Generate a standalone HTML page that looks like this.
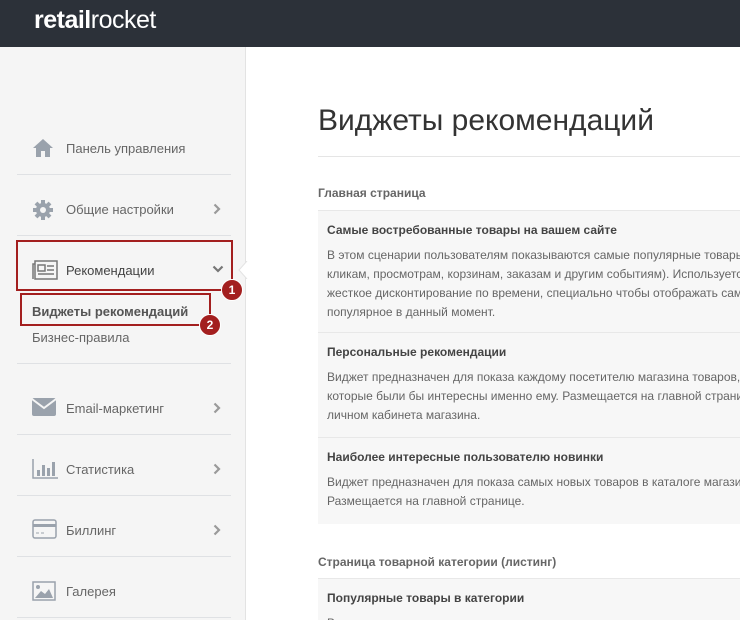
<!DOCTYPE html>
<html><head><meta charset="utf-8"><style>
*{margin:0;padding:0;box-sizing:border-box}
html,body{width:740px;height:620px;overflow:hidden}
body{font-family:"Liberation Sans",sans-serif;background:#fff;position:relative}
.hdr{position:absolute;left:0;top:0;width:740px;height:47px;background:#2c3139}
.logo{position:absolute;left:34px;top:6px;color:#fff;font-size:25px;letter-spacing:-0.5px}
.side{position:absolute;left:0;top:47px;width:246px;height:573px;background:#f5f5f5;border-right:1px solid #e3e3e3}
.sep{position:absolute;left:17px;width:214px;height:1px;background:#dfe1e4}
.it{position:absolute;left:66px;font-size:13px;color:#666;line-height:16px}
.ic{position:absolute;left:32px}
.chev{position:absolute;left:213px}
.red{position:absolute;border:2px solid #a31f1f}
.badge{position:absolute;width:22px;height:22px;border-radius:50%;background:#a31f1f;color:#fff;font-size:12px;font-weight:bold;text-align:center;line-height:20px;border:1px solid #fff}
h1{position:absolute;left:318px;top:104px;font-size:30px;font-weight:normal;color:#333;white-space:nowrap}
.hl{position:absolute;left:318px;top:156px;width:422px;height:1px;background:#e5e5e5}
.sh{position:absolute;left:318px;font-size:12px;font-weight:bold;color:#666;white-space:nowrap}
.card{position:absolute;left:318px;width:422px;background:#f7f7f7;border-top:1px solid #e8e8e8;padding:12px 0 0 9px;white-space:nowrap;overflow:hidden}
.card b{display:block;font-size:12px;color:#444;margin-bottom:9px}
.card p{font-size:12px;color:#666;line-height:19px}
</style></head><body>
<div class="hdr"><div class="logo"><b>retail</b>rocket</div></div>
<div class="side">
 <svg style="position:absolute;left:238px;top:214px" width="10" height="18"><path d="M9 0 L1 9 L9 18" fill="#fff" stroke="#e3e3e3"/></svg>
</div>
<div class="sep" style="top:174px"></div><div class="sep" style="top:235px"></div><div class="sep" style="top:363px"></div><div class="sep" style="top:434px"></div><div class="sep" style="top:495px"></div><div class="sep" style="top:556px"></div><div class="sep" style="top:617px"></div>

<svg class="ic" style="top:138px" width="22" height="20"><path d="M11 1 L1 10 H4 V19 H9 V13 H13 V19 H18 V10 H21Z" fill="#9aa2ac"/></svg>
<div class="it" style="top:141px">Панель управления</div>
<svg class="ic" style="top:199px" width="22" height="22"><circle cx="11" cy="11" r="7" fill="#9aa2ac"/><g stroke="#9aa2ac" stroke-width="4"><path d="M11 1V21M1 11H21M4 4L18 18M18 4L4 18"/></g><circle cx="11" cy="11" r="3" fill="#f5f5f5"/></svg>
<div class="it" style="top:202px">Общие настройки</div>
<svg class="chev" style="top:203px" width="8" height="12"><path d="M1.5 1.5L6 6L1.5 10.5" fill="none" stroke="#9a9a9a" stroke-width="2.2"/></svg>
<svg class="ic" style="top:260px" width="26" height="20"><rect x="3" y="1" width="22" height="18" fill="none" stroke="#777" stroke-width="1.5"/><path d="M3 4H1V19" fill="none" stroke="#777" stroke-width="1.5"/><rect x="6" y="5" width="7" height="6" fill="none" stroke="#777" stroke-width="1.5"/><path d="M15 6H22M15 10H22M6 14H22" stroke="#777" stroke-width="1.5"/></svg>
<div class="it" style="top:263px;color:#444">Рекомендации</div>
<svg class="chev" style="top:265px;left:212px" width="12" height="8"><path d="M1.5 1.5L6 6L10.5 1.5" fill="none" stroke="#777" stroke-width="2.2"/></svg>
<div class="it" style="left:32px;top:304px;font-weight:bold;color:#555">Виджеты рекомендаций</div>
<div class="it" style="left:32px;top:330px">Бизнес-правила</div>
<div class="red" style="left:16px;top:240px;width:217px;height:51px"></div>
<div class="red" style="left:20px;top:293px;width:191px;height:33px"></div>
<div class="badge" style="left:221px;top:279px">1</div>
<div class="badge" style="left:199px;top:314px">2</div>

<svg class="ic" style="top:398px" width="24" height="18"><rect x="0" y="0" width="24" height="18" rx="2" fill="#9aa2ac"/><path d="M0 1L12 10L24 1" fill="none" stroke="#f5f5f5" stroke-width="2"/></svg>
<div class="it" style="top:401px">Email-маркетинг</div>
<svg class="chev" style="top:402px" width="8" height="12"><path d="M1.5 1.5L6 6L1.5 10.5" fill="none" stroke="#9a9a9a" stroke-width="2.2"/></svg>
<svg class="ic" style="top:459px" width="26" height="20"><path d="M1 0V19H26" fill="none" stroke="#9aa2ac" stroke-width="1.5"/><g fill="#9aa2ac"><rect x="5" y="11" width="3" height="6"/><rect x="10" y="6" width="3" height="11"/><rect x="15" y="9" width="3" height="8"/><rect x="20" y="3" width="3" height="14"/></g></svg>
<div class="it" style="top:462px">Статистика</div>
<svg class="chev" style="top:463px" width="8" height="12"><path d="M1.5 1.5L6 6L1.5 10.5" fill="none" stroke="#9a9a9a" stroke-width="2.2"/></svg>
<svg class="ic" style="top:519px" width="25" height="20"><rect x="1" y="1" width="23" height="18" rx="2" fill="none" stroke="#9aa2ac" stroke-width="1.5"/><rect x="1" y="5" width="23" height="3" fill="#9aa2ac"/><path d="M4 14H7M9 14H12" stroke="#9aa2ac"/></svg>
<div class="it" style="top:523px">Биллинг</div>
<svg class="chev" style="top:524px" width="8" height="12"><path d="M1.5 1.5L6 6L1.5 10.5" fill="none" stroke="#9a9a9a" stroke-width="2.2"/></svg>
<svg class="ic" style="top:581px" width="24" height="20"><rect x="1" y="1" width="22" height="18" fill="none" stroke="#9aa2ac" stroke-width="1.5"/><circle cx="6" cy="6" r="2" fill="#9aa2ac"/><path d="M3 17L9 10L13 13L17 8L21 17Z" fill="#9aa2ac"/></svg>
<div class="it" style="top:584px">Галерея</div>

<h1>Виджеты рекомендаций</h1>
<div class="hl"></div>
<div class="sh" style="top:186px">Главная страница</div>
<div class="card" style="top:210px;height:123px"><b>Самые востребованные товары на вашем сайте</b><p>В этом сценарии пользователям показываются самые популярные товары (по<br>кликам, просмотрам, корзинам, заказам и другим событиям). Используется<br>жесткое дисконтирование по времени, специально чтобы отображать самое<br>популярное в данный момент.</p></div>
<div class="card" style="top:332px;height:106px"><b>Персональные рекомендации</b><p>Виджет предназначен для показа каждому посетителю магазина товаров,<br>которые были бы интересны именно ему. Размещается на главной странице и в<br>личном кабинета магазина.</p></div>
<div class="card" style="top:437px;height:87px"><b>Наиболее интересные пользователю новинки</b><p>Виджет предназначен для показа самых новых товаров в каталоге магазина.<br>Размещается на главной странице.</p></div>
<div class="sh" style="top:555px">Страница товарной категории (листинг)</div>
<div class="card" style="top:578px;height:42px"><b>Популярные товары в категории</b><p>В этом сценарии пользователям показываются самые популярные товары</p></div>
</body></html>
